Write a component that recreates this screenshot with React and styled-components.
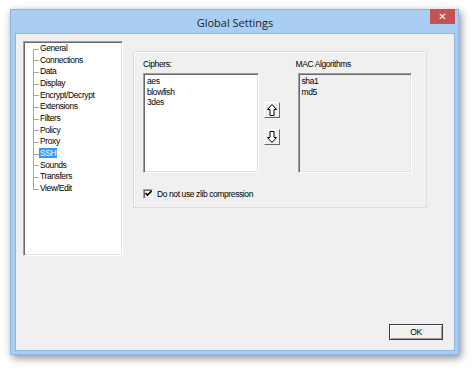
import React from "react";
import styled, { createGlobalStyle } from "styled-components";

const GlobalStyle = createGlobalStyle`
	html, body {
		margin: 0;
		padding: 0;
		background: #ffffff;
	}
	body {
		font-family: "Liberation Sans", Arial, sans-serif;
		font-size: 8.5px;
		letter-spacing: -0.4px;
		color: #000;
	}
`;

const Page = styled.div`
	width: 474px;
	height: 370px;
	padding: 9px 0 0 10px;
	box-sizing: border-box;
`;

const Window = styled.div`
	width: 449px;
	height: 346px;
	box-sizing: border-box;
	background: #a9cdf3;
	border: 1px solid #8fb4df;
	padding: 0 3px 3px 4px;
	display: flex;
	flex-direction: column;
	box-shadow: 2px 3px 8px rgba(0, 0, 0, 0.45);
`;

const TitleBar = styled.div`
	height: 22px;
	display: flex;
	align-items: center;
	justify-content: center;
	position: relative;
	font-family: "Open Sans", "Liberation Sans", sans-serif;
	font-size: 11px;
	letter-spacing: 0;
	color: #1e1e1e;
	padding-top: 1px;
`;

const CloseButton = styled.div`
	position: absolute;
	top: -1px;
	right: 0;
	width: 25px;
	height: 15px;
	background: #c75050;
	color: #fff;
	display: flex;
	align-items: center;
	justify-content: center;
	font-family: "DejaVu Sans", sans-serif;
	font-size: 10px;
	font-weight: bold;
`;

const Client = styled.div`
	flex: 1;
	background: #f0f0f0;
	border: 1px solid #8fb4df;
	padding: 7px 10px 10px 7px;
	display: flex;
	flex-direction: column;
`;

const Main = styled.div`
	flex: 1;
	display: flex;
	align-items: flex-start;
	gap: 10px;
`;

const Sunken = styled.div`
	box-sizing: border-box;
	border-style: solid;
	border-width: 1px;
	border-color: #a0a0a0 #ffffff #ffffff #a0a0a0;
	box-shadow: inset 1px 1px 0 #696969, inset -1px -1px 0 #e3e3e3;
`;

const TreeBox = styled(Sunken)`
	width: 100px;
	height: 215px;
	background: #fff;
	padding: 1px 0 0 9px;
`;

const TreeItem = styled.div`
	position: relative;
	height: 11.67px;
	line-height: 11.67px;
	padding-left: 6px;
	white-space: nowrap;

	&::before {
		content: "";
		position: absolute;
		left: 0;
		width: 6px;
		top: 50%;
		border-top: 1px solid #a8a8a8;
	}

	&::after {
		content: "";
		position: absolute;
		left: 0;
		top: ${p => (p.$first ? "50%" : "0")};
		bottom: ${p => (p.$last ? "50%" : "0")};
		border-left: 1px solid #a8a8a8;
	}
`;

const TreeLabel = styled.span`
	padding: 0 1px;
	background: ${p => (p.$selected ? "#3399ff" : "transparent")};
	color: ${p => (p.$selected ? "#fff" : "#000")};
`;

const GroupBox = styled.div`
	margin-top: 10px;
	width: 294px;
	height: 157px;
	box-sizing: border-box;
	border: 1px solid #d5dfe5;
	box-shadow: inset 1px 1px 0 #fff;
	padding: 7px 14px 0 9px;
`;

const Lists = styled.div`
	display: flex;
	align-items: stretch;
`;

const Column = styled.div`
	display: flex;
	flex-direction: column;
	width: ${p => p.$width}px;
`;

const Label = styled.div`
	height: 11px;
	line-height: 11px;
	margin-bottom: 3px;
`;

const ListBox = styled(Sunken)`
	height: 100px;
	background: ${p => (p.$disabled ? "#f0f0f0" : "#fff")};
	padding: 2px 3px;
	margin-left: ${p => p.$indent || 0}px;
`;

const ListItem = styled.div`
	height: 10.5px;
	line-height: 10.5px;
`;

const Arrows = styled.div`
	width: 16px;
	margin: 14px 16px 0 5px;
	display: flex;
	flex-direction: column;
	justify-content: center;
	gap: 11px;
`;

const ArrowButton = styled.div`
	width: 16px;
	height: 16px;
	box-sizing: border-box;
	border-style: solid;
	border-width: 1px;
	border-color: #ffffff #696969 #696969 #ffffff;
	display: flex;
	align-items: center;
	justify-content: center;
	background: #f0f0f0;
`;

const CheckRow = styled.label`
	margin-top: 15px;
	display: flex;
	align-items: center;
	gap: 4px;
	height: 11px;
`;

const CheckBox = styled(Sunken)`
	width: 10px;
	height: 10px;
	background: #fff;
	display: flex;
	align-items: center;
	justify-content: center;
`;

const Footer = styled.div`
	display: flex;
	justify-content: flex-end;
`;

const Button = styled.div`
	width: 54px;
	height: 16px;
	box-sizing: border-box;
	border: 1px solid #3c3c3c;
	box-shadow: inset 1px 1px 0 #fff, inset -1px -1px 0 #a0a0a0;
	display: flex;
	align-items: center;
	justify-content: center;
	margin-right: 1px;
`;

const UpArrow = () => (
	<svg width="10" height="12" viewBox="0 0 10 12">
		<path d="M5 0.5 L9.5 5.5 L7 5.5 L7 11.5 L3 11.5 L3 5.5 L0.5 5.5 Z" fill="#fff" stroke="#000" strokeWidth="1" />
	</svg>
);

const DownArrow = () => (
	<svg width="10" height="12" viewBox="0 0 10 12">
		<path d="M5 11.5 L9.5 6.5 L7 6.5 L7 0.5 L3 0.5 L3 6.5 L0.5 6.5 Z" fill="#fff" stroke="#000" strokeWidth="1" />
	</svg>
);

const Check = () => (
	<svg width="7" height="7" viewBox="0 0 7 7">
		<path d="M0.5 3 L2.5 5 L6.5 1" fill="none" stroke="#000" strokeWidth="1.6" />
	</svg>
);

const pages = [
	"General",
	"Connections",
	"Data",
	"Display",
	"Encrypt/Decrypt",
	"Extensions",
	"Filters",
	"Policy",
	"Proxy",
	"SSH",
	"Sounds",
	"Transfers",
	"View/Edit",
];

const ciphers = ["aes", "blowfish", "3des"];
const macs = ["sha1", "md5"];

const App = () => {
	return (
		<Page>
			<GlobalStyle />
			<Window>
				<TitleBar>
					Global Settings
					<CloseButton>✕</CloseButton>
				</TitleBar>
				<Client>
					<Main>
						<TreeBox>
							{pages.map((name, i) => (
								<TreeItem key={name} $first={i === 0} $last={i === pages.length - 1}>
									<TreeLabel $selected={name === "SSH"}>{name}</TreeLabel>
								</TreeItem>
							))}
						</TreeBox>
						<GroupBox>
							<Lists>
								<Column $width={116}>
									<Label>Ciphers:</Label>
									<ListBox>
										{ciphers.map(c => (
											<ListItem key={c}>{c}</ListItem>
										))}
									</ListBox>
								</Column>
								<Arrows>
									<ArrowButton>
										<UpArrow />
									</ArrowButton>
									<ArrowButton>
										<DownArrow />
									</ArrowButton>
								</Arrows>
								<Column $width={117}>
									<Label>MAC Algorithms</Label>
									<ListBox $disabled $indent={2}>
										{macs.map(m => (
											<ListItem key={m}>{m}</ListItem>
										))}
									</ListBox>
								</Column>
							</Lists>
							<CheckRow>
								<CheckBox>
									<Check />
								</CheckBox>
								Do not use zlib compression
							</CheckRow>
						</GroupBox>
					</Main>
					<Footer>
						<Button>OK</Button>
					</Footer>
				</Client>
			</Window>
		</Page>
	);
};

export default App;
